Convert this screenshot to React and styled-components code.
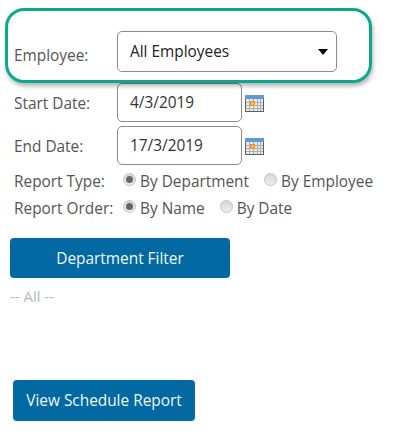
import React from "react";
import styled, { createGlobalStyle } from "styled-components";

const GlobalStyle = createGlobalStyle`
  html, body { margin: 0; padding: 0; background: #fff; }
  body { font-family: "Open Sans", "Liberation Sans", sans-serif; }
`;

const Page = styled.div`
  position: relative;
  width: 410px;
  height: 443px;
  overflow: hidden;
  padding-top: 31px;
  box-sizing: border-box;
`;

// green callout drawn over the employee row
const Highlight = styled.div`
  position: absolute;
  left: 5px;
  top: 8px;
  width: 361px;
  height: 69px;
  border: 3px solid #0aa98d;
  border-radius: 19px;
  box-shadow: 1px 3px 4px rgba(0, 0, 0, 0.3);
  pointer-events: none;
`;

const Form = styled.div`
  display: flex;
  flex-direction: column;
  padding-left: 14px;
`;

const Row = styled.div`
  display: flex;
  align-items: center;
  margin-top: ${({ $top }) => $top || 0}px;
  height: ${({ $height }) => $height || 39}px;
`;

const Label = styled.label`
  width: 103px;
  flex-shrink: 0;
  font-size: 15.4px;
  color: #555;
  position: relative;
  top: ${({ $shift }) => $shift || 0}px;
`;

const SelectBox = styled.div`
  width: 220px;
  height: 41px;
  box-sizing: border-box;
  border: 1px solid #8c8c8c;
  border-radius: 5px;
  display: flex;
  align-items: center;
  justify-content: space-between;
  padding: 0 7px 1px 12px;
  font-size: 15.4px;
  color: #222;
`;

const Caret = styled.span`
  width: 0;
  height: 0;
  border-left: 5.5px solid transparent;
  border-right: 5.5px solid transparent;
  border-top: 6px solid #000;
  margin: 1px 1px 0 0;
`;

const DateInput = styled.div`
  width: 125px;
  height: 39px;
  box-sizing: border-box;
  border: 1px solid #8c8c8c;
  border-radius: 5px;
  display: flex;
  align-items: center;
  padding: 0 0 0 12px;
  font-size: 15.4px;
  color: #333;
`;

const CalendarWrap = styled.span`
  display: flex;
  margin-left: 3px;
  position: relative;
  top: 1px;
`;

const RadioLabel = styled.span`
  font-size: 15.4px;
  color: #555;
  margin-left: 4px;
`;

const RadioItem = styled.span`
  display: flex;
  align-items: center;
  margin-left: ${({ $left }) => $left || 0}px;
`;

const RadioDot = styled.span`
  width: 13px;
  height: 13px;
  box-sizing: border-box;
  border-radius: 50%;
  border: 1px solid #c4c4c4;
  background: linear-gradient(#d6d6d6, #eeeeee);
  display: flex;
  align-items: center;
  justify-content: center;
  position: relative;
  top: -2px;

  &::after {
    content: "";
    display: ${({ $on }) => ($on ? "block" : "none")};
    width: 7px;
    height: 7px;
    border-radius: 50%;
    background: #666;
  }
`;

const FilterButton = styled.button`
  display: block;
  margin: 16px 0 0 10px;
  width: 220px;
  height: 40px;
  border: 0;
  border-radius: 4px;
  background: #0369a3;
  color: #f2f7fa;
  font: 15.4px "Open Sans", "Liberation Sans", sans-serif;
  padding: 0;
`;

const AllText = styled.div`
  margin: 9px 0 0 10px;
  height: 19px;
  line-height: 19px;
  font-size: 15px;
  color: #b4bac6;
`;

const ViewButton = styled(FilterButton)`
  margin: 74px 0 0 13px;
  width: 182px;
  height: 41px;
  padding-bottom: 1px;
`;

const CalendarIcon = () => (
  <svg width="20" height="18" viewBox="0 0 20 18">
    <rect x="0.5" y="0.5" width="18" height="16" fill="#e8e8e8" stroke="#5f5f5f" />
    <rect x="0" y="0" width="19" height="4" fill="#5b9bd8" />
    <path
      d="M1 7.5h17M1 10.5h17M1 13.5h17M4.5 4v12M8.5 4v12M12.5 4v12M15.5 4v12"
      stroke="#b0b0b0"
      strokeWidth="1"
      fill="none"
    />
    <rect x="5" y="6" width="5" height="5" fill="#f7941d" />
    <rect x="6.5" y="7.5" width="2" height="2" fill="#fbd89a" />
  </svg>
);

const App = () => (
  <>
    <GlobalStyle />
    <Page>
      <Form>
        <Row $height={41}>
          <Label $shift={4}>Employee:</Label>
          <SelectBox>
            All Employees
            <Caret />
          </SelectBox>
        </Row>
        <Row $top={11}>
          <Label $shift={1}>Start Date:</Label>
          <DateInput>4/3/2019</DateInput>
          <CalendarWrap><CalendarIcon /></CalendarWrap>
        </Row>
        <Row $top={4}>
          <Label $shift={1}>End Date:</Label>
          <DateInput>17/3/2019</DateInput>
          <CalendarWrap><CalendarIcon /></CalendarWrap>
        </Row>
        <Row $top={3} $height={27}>
          <Label>Report Type:</Label>
          <RadioItem $left={6}>
            <RadioDot $on />
            <RadioLabel>By Department</RadioLabel>
          </RadioItem>
          <RadioItem $left={15}>
            <RadioDot />
            <RadioLabel>By Employee</RadioLabel>
          </RadioItem>
        </Row>
        <Row $height={27}>
          <Label>Report Order:</Label>
          <RadioItem $left={6}>
            <RadioDot $on />
            <RadioLabel>By Name</RadioLabel>
          </RadioItem>
          <RadioItem $left={15}>
            <RadioDot />
            <RadioLabel>By Date</RadioLabel>
          </RadioItem>
        </Row>
      </Form>
      <FilterButton>Department Filter</FilterButton>
      <AllText>-- All --</AllText>
      <ViewButton>View Schedule Report</ViewButton>
      <Highlight />
    </Page>
  </>
);

export default App;
